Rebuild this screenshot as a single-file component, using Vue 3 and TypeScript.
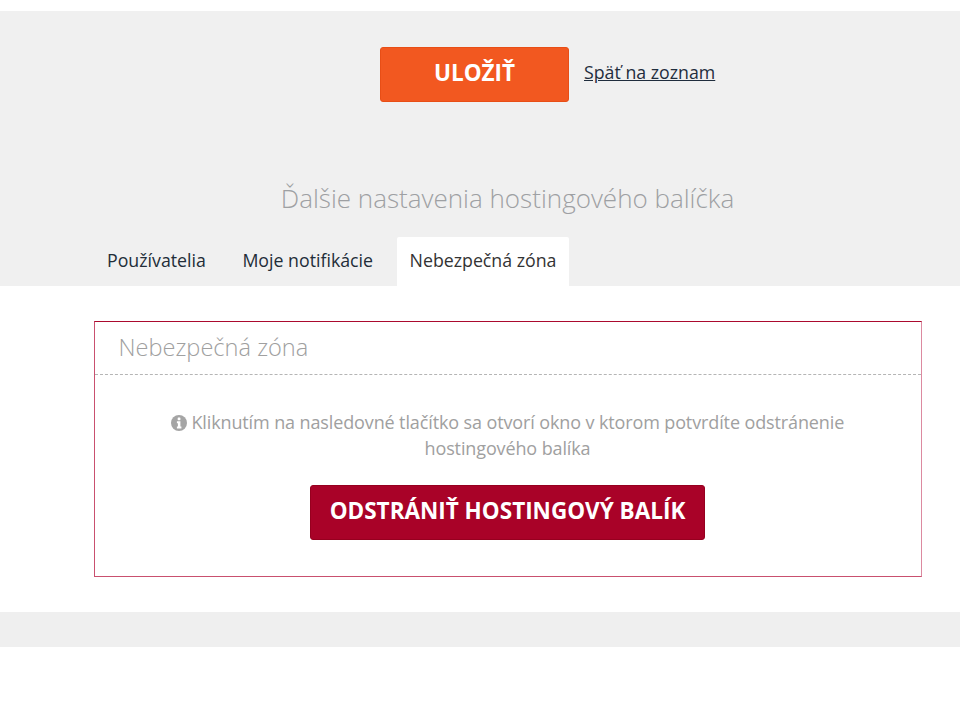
<script setup lang="ts">
const tabs: { label: string; active?: boolean }[] = [
  { label: 'Používatelia' },
  { label: 'Moje notifikácie' },
  { label: 'Nebezpečná zóna', active: true },
]
</script>

<template>
  <div class="page">
    <section class="top">
      <div class="actions">
        <button class="save" type="button">ULOŽIŤ</button>
        <a class="back" href="#">Späť na zoznam</a>
      </div>
      <h2 class="heading">Ďalšie nastavenia hostingového balíčka</h2>
      <nav class="tabs">
        <a v-for="t in tabs" :key="t.label" class="tab" :class="{ active: t.active }" href="#">{{ t.label }}</a>
      </nav>
    </section>
    <section class="main">
      <div class="card">
        <h3 class="card-title">Nebezpečná zóna</h3>
        <div class="card-body">
          <p class="note">
            <svg class="info" viewBox="0 0 16 16" aria-hidden="true">
              <circle cx="8" cy="8" r="8" fill="#a5a5a5" />
              <rect x="6.7" y="2.6" width="2.7" height="2.6" rx="0.4" fill="#fff" />
              <path d="M5.9 6.3h3.5v5.2h1v1.9H5.9v-1.9h1V8.2h-1z" fill="#fff" />
            </svg>
            Kliknutím na nasledovné tlačítko sa otvorí okno v ktorom potvrdíte odstránenie hostingového balíka
          </p>
          <button class="danger" type="button">ODSTRÁNIŤ HOSTINGOVÝ BALÍK</button>
        </div>
      </div>
    </section>
    <div class="footer-band"></div>
  </div>
</template>

<style scoped>
.page {
  font-family: "Open Sans", "Noto Sans", sans-serif;
  padding-top: 11px;
  color: #222d38;
}
.top {
  background: #f0f0f0;
  height: 275px;
  display: flex;
  flex-direction: column;
}
.actions {
  display: flex;
  align-items: center;
  padding: 36px 0 0 380px;
}
.save {
  width: 189px;
  height: 55px;
  background: #f25820;
  border: 1px solid #e84e16;
  border-radius: 3px;
  color: #fff;
  font: 700 22.5px "Open Sans", sans-serif;
  padding: 0 0 4px;
}
.back {
  margin-left: 15px;
  margin-top: -5px;
  font-size: 17.75px;
  color: #1f2d3d;
  text-decoration: underline;
}
.heading {
  margin: 78px 0 0;
  text-align: center;
  font-size: 26px;
  line-height: 36px;
  font-weight: 300;
  color: #9ea0a3;
  padding-left: 55px;
}
.tabs {
  display: flex;
  gap: 10.5px;
  margin-top: auto;
  padding-left: 94px;
}
.tab {
  height: 49px;
  line-height: 47px;
  padding: 0 13px;
  font-size: 17.75px;
  color: #222d38;
  text-decoration: none;
}
.tab.active {
  background: #fff;
  border-radius: 2px 2px 0 0;
  color: #333;
}
.main {
  height: 326px;
  padding: 35px 38px 0 94px;
  box-sizing: border-box;
}
.card {
  height: 256px;
  box-sizing: border-box;
  border: 1px solid #c9506f;
  border-top-color: #ab0a2e;
  border-right-color: #dc8aa0;
}
.card-title {
  margin: 0;
  height: 53px;
  line-height: 50px;
  padding-left: 23.5px;
  box-sizing: border-box;
  border-bottom: 1px dashed #b5b5b5;
  font-size: 23.6px;
  font-weight: 300;
  color: #a0a0a0;
}
.card-body {
  display: flex;
  flex-direction: column;
  align-items: center;
  padding: 34px 61px 0 60px;
}
.note {
  margin: 0;
  text-align: center;
  font-size: 18px;
  line-height: 26px;
  color: #a0a0a0;
  letter-spacing: -0.12px;
}
.info {
  width: 16px;
  height: 16px;
  vertical-align: -1.5px;
}
.danger {
  margin-top: 24px;
  width: 395px;
  height: 55px;
  background: #a90228;
  border: 1px solid #96001f;
  border-radius: 3px;
  color: #fff;
  font: 700 22.5px "Open Sans", sans-serif;
  padding: 0 0 4px;
}
.footer-band {
  height: 35px;
  background: #efefef;
}
</style>
